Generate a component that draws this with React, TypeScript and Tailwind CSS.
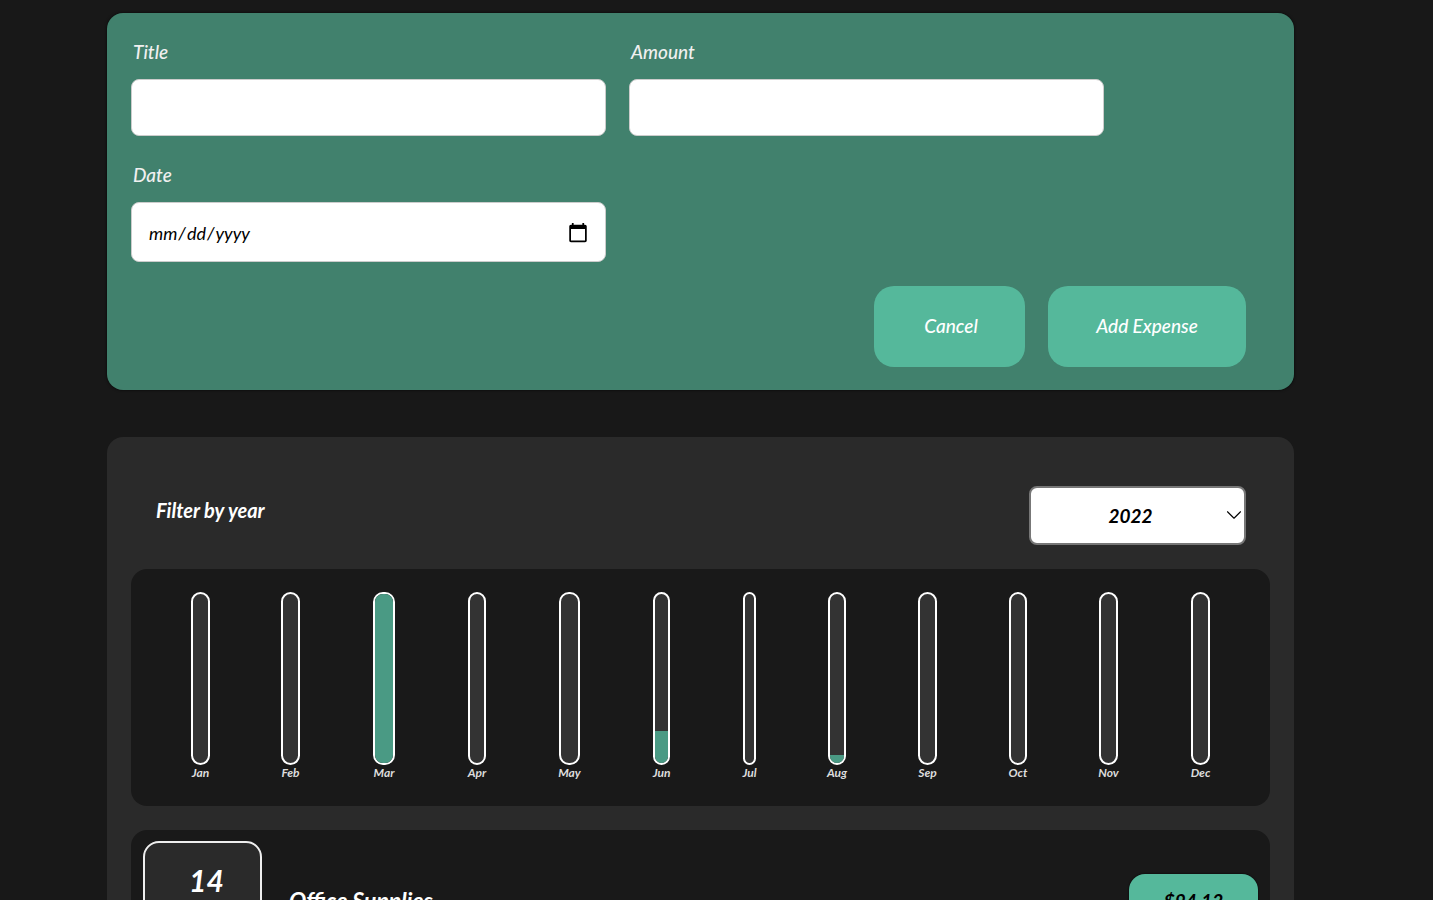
import { ChevronDown } from "lucide-react";

type MonthBar = {
  label: string;
  width: string;
  gap: string;
  fill: number;
};

const months: MonthBar[] = [
  { label: "Jan", width: "w-[19px]", gap: "ml-0", fill: 0 },
  { label: "Feb", width: "w-[19px]", gap: "ml-[71px]", fill: 0 },
  { label: "Mar", width: "w-[22px]", gap: "ml-[73px]", fill: 100 },
  { label: "Apr", width: "w-[18px]", gap: "ml-[73px]", fill: 0 },
  { label: "May", width: "w-[21px]", gap: "ml-[73px]", fill: 0 },
  { label: "Jun", width: "w-[17px]", gap: "ml-[73px]", fill: 19 },
  { label: "Jul", width: "w-[13px]", gap: "ml-[73px]", fill: 0 },
  { label: "Aug", width: "w-[18px]", gap: "ml-[72px]", fill: 5 },
  { label: "Sep", width: "w-[19px]", gap: "ml-[72px]", fill: 0 },
  { label: "Oct", width: "w-[18px]", gap: "ml-[72px]", fill: 0 },
  { label: "Nov", width: "w-[19px]", gap: "ml-[72px]", fill: 0 },
  { label: "Dec", width: "w-[19px]", gap: "ml-[73px]", fill: 0 },
];

function Field({
  label,
  type,
  inputClass,
}: {
  label: string;
  type: string;
  inputClass: string;
}) {
  return (
    <label className="block w-[475px]">
      <span className="mb-2 block h-[34px] pl-0.5 text-[19px] leading-[30px] font-medium text-[#f0f0f0] italic">
        {label}
      </span>
      <input
        type={type}
        className={`block w-full rounded-lg border border-[#cccccc] bg-white px-4 pt-0.5 text-[18px] text-black italic [&::-webkit-calendar-picker-indicator]:h-[22px] [&::-webkit-calendar-picker-indicator]:w-[22px] [&::-webkit-calendar-picker-indicator]:p-0 ${inputClass}`}
      />
    </label>
  );
}

function ChartBar({ month }: { month: MonthBar }) {
  return (
    <div className={`flex flex-col items-center ${month.width} ${month.gap}`}>
      <div className="flex h-[173px] w-full flex-col justify-end overflow-hidden rounded-[10px] border-2 border-white bg-[#333333]">
        <div
          className="w-full bg-[#4a9a84]"
          style={{ height: `${month.fill}%` }}
        />
      </div>
      <span className="h-4 text-xs leading-4 font-bold whitespace-nowrap text-[#dddddd] italic">
        {month.label}
      </span>
    </div>
  );
}

export default function App() {
  return (
    <div className="h-[900px] overflow-hidden bg-[#181818] px-[107px] pt-[13px] font-['Lato',sans-serif]">
      <form className="w-[1187px] rounded-2xl bg-[#41816d] px-6 pt-6 pb-[23px] shadow-[0_0_3px_rgba(0,0,0,0.8)]">
        <div className="flex flex-wrap gap-x-[23px] gap-y-6">
          <Field label="Title" type="text" inputClass="h-[57px]" />
          <Field label="Amount" type="text" inputClass="h-[57px]" />
          <Field label="Date" type="date" inputClass="h-[60px]" />
        </div>
        <div className="mt-6 flex justify-end gap-[23px] pr-6">
          <button
            type="button"
            className="h-[81px] w-[151px] rounded-[20px] bg-[#55b89b] pl-[3px] text-[19px] font-medium text-white italic"
          >
            Cancel
          </button>
          <button
            type="button"
            className="h-[81px] w-[198px] rounded-[20px] bg-[#55b89b] text-[19px] font-medium text-white italic"
          >
            Add Expense
          </button>
        </div>
      </form>

      <section className="mt-[47px] w-[1187px] rounded-2xl bg-[#2a2a2a] px-6 pt-6">
        <div className="flex items-center justify-between px-6 pt-[25px] pb-6">
          <span className="pb-[11px] pl-px text-[20px] font-bold text-white italic">
            Filter by year
          </span>
          <div className="relative w-[217px]">
            <select className="h-[59px] w-full appearance-none rounded-lg border-2 border-[#777777] bg-white pt-0.5 pr-[14px] text-center text-[19px] font-bold text-black italic">
              <option>2022</option>
            </select>
            <ChevronDown
              className="absolute top-4 -right-px h-[26px] w-[26px] text-black"
              strokeWidth={1}
            />
          </div>
        </div>

        <div className="flex h-[237px] rounded-2xl bg-[#191919] pt-[23px] pl-[60px]">
          {months.map((month) => (
            <ChartBar key={month.label} month={month} />
          ))}
        </div>

        <div className="mt-6 flex h-[146px] items-center justify-between rounded-2xl bg-[#191919] px-3">
          <div className="flex items-center">
            <div className="flex h-[124px] w-[119px] justify-center rounded-2xl border-2 border-[#eeeeee] bg-[#2a2a2a] pt-[17px] pl-2">
              <span className="text-[30px] leading-10 font-bold text-white italic">
                14
              </span>
            </div>
            <h2 className="mb-[6px] ml-[27px] text-[23px] font-bold text-white italic">
              Office Supplies
            </h2>
          </div>
          <div className="flex h-[58px] w-[129px] items-center justify-center rounded-2xl bg-[#55b89b] pb-1 text-[19px] font-bold text-black italic shadow-[0_0_2px_#000]">
            $94.12
          </div>
        </div>
      </section>
    </div>
  );
}
